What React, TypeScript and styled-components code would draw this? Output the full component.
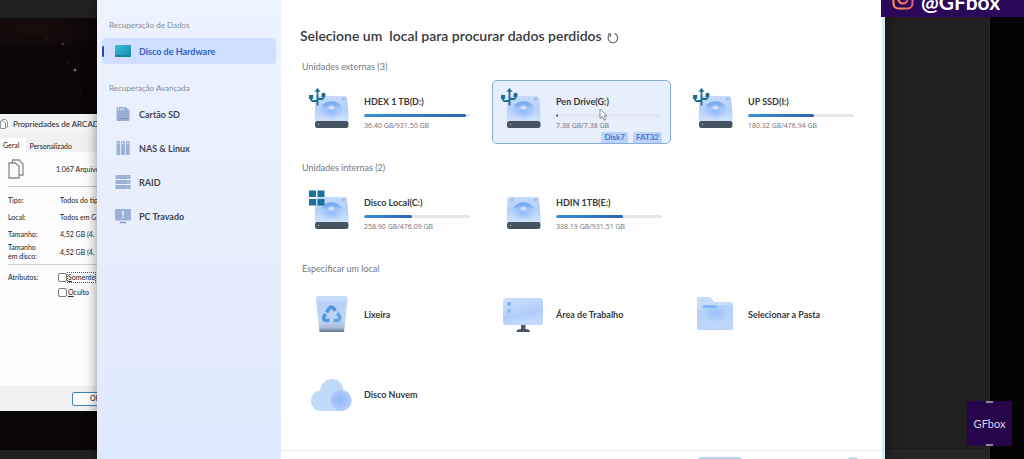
import React from "react";
import styled, { createGlobalStyle, css } from "styled-components";

const GlobalStyle = createGlobalStyle`
  *, *::before, *::after { box-sizing: border-box; }
  body {
    margin: 0;
    background: #060304;
    font-family: Lato, "Open Sans", sans-serif;
    color: #38393b;
  }
  button { font: inherit; color: inherit; border: 0; padding: 0; background: none; text-align: left; }
  h1, h2, p, dl, dd, dt { margin: 0; font-weight: inherit; }
  svg { display: block; flex: none; overflow: visible; }
`;

const Desktop = styled.div`
  position: relative;
  display: grid;
  grid-template-columns: 97px minmax(0, 1fr) 139px;
  min-height: 100vh;
  overflow: hidden;
`;

/* ---------- Left: desktop with the properties dialog ---------- */

const LeftDesktop = styled.div`
  display: flex;
  flex-direction: column;
  min-width: 0;
  overflow: hidden;
  background:
    radial-gradient(circle at 75px 70px, #a99aa0 0, transparent 2px),
    radial-gradient(circle at 63px 44px, #6d3a36 0, transparent 2px),
    radial-gradient(circle at 46px 39px, #6a4038 0, transparent 1px),
    radial-gradient(circle at 68px 62px, #573434 0, transparent 1px),
    radial-gradient(circle at 80px 90px, #6b3a3a 0, transparent 1px),
    radial-gradient(ellipse 90px 24px at 30px 30px, #1a0d0d, transparent),
    #0a0507;
`;

const Strip = styled.div<{ $height: number }>`
  flex: none;
  height: ${(p) => p.$height}px;
  background: #212121;
`;

const Dialog = styled.section`
  width: 240px;
  margin: 96px 0 auto;
  background: #f0f0f0;
  color: #222;
  font-size: 7px;
  line-height: 9px;
  white-space: nowrap;
`;

const DialogTitle = styled.h2`
  display: flex;
  align-items: center;
  gap: 5px;
  height: 20px;
  background: #f3f3f3;
  font-size: 8px;
`;

const TabBar = styled.div`
  display: flex;
  align-items: flex-end;
  height: 18px;
`;

const Tab = styled.button<{ $active?: boolean }>`
  height: ${(p) => (p.$active ? 14 : 12)}px;
  padding: 0 ${(p) => (p.$active ? 7 : 3)}px 0 3px;
  background: ${(p) => (p.$active ? "#fdfdfd" : "#f0f0f0")};
`;

const DialogPage = styled.div`
  display: flex;
  flex-direction: column;
  height: 234px;
  padding-left: 8px;
  background: #fcfcfc;
`;

const DialogHead = styled.div`
  display: flex;
  align-items: center;
  gap: 32px;
  height: 35px;
  border-bottom: 1px solid #c4c4c4;
`;

const Facts = styled.dl`
  display: grid;
  grid-template-columns: 52px 1fr;
  grid-template-rows: 17px 17px 17px 18px;
  align-items: center;
  padding: 5px 0 3px;
  border-bottom: 1px solid #d0d0d0;
`;

const Attributes = styled.div`
  display: grid;
  grid-template-columns: 50px 1fr;
  grid-auto-rows: 15px;
  align-items: center;
  padding-top: 5px;
`;

const CheckLabel = styled.label<{ $focused?: boolean }>`
  grid-column: 2;
  display: flex;
  align-items: center;
  gap: 1px;
  input {
    appearance: none;
    width: 9px;
    height: 9px;
    margin: 0;
    border: 1px solid #777;
    border-radius: 2px;
    background: #fff;
  }
  span { outline: ${(p) => (p.$focused ? "1px dotted #555" : "none")}; }
`;

const DialogFooter = styled.div`
  display: flex;
  align-items: center;
  height: 25px;
  padding-left: 72px;
`;

const OkButton = styled.button`
  width: 46px;
  height: 14px;
  border: 1px solid #3f86b4;
  border-radius: 2px;
  background: #fdfdfd;
  text-align: center;
`;

/* ---------- Recovery window ---------- */

const Window = styled.div`
  display: grid;
  grid-template-columns: 184px minmax(0, 1fr);
  border-right: 3px solid #dbe7fb;
  background: #fff;
  box-shadow: 0 0 12px rgba(0, 0, 0, 0.45);
  z-index: 1;
`;

const Sidebar = styled.nav`
  display: flex;
  flex-direction: column;
  padding: 17px 5px;
  background: linear-gradient(#ecf3fe, #e7effd 45%, #dde9fd);
`;

const NavHeading = styled.h2`
  padding-left: 7px;
  margin-bottom: 5px;
  font-size: 8px;
  line-height: 16px;
  color: #868c97;
`;

const NavGroup = styled.div`
  display: flex;
  flex-direction: column;
  gap: 8px;
  margin-bottom: 16px;
`;

const NavItem = styled.button<{ $active?: boolean }>`
  position: relative;
  display: flex;
  align-items: center;
  gap: 8px;
  height: 26px;
  padding-left: 13px;
  border-radius: 4px;
  font-size: 9px;
  font-weight: 700;
  color: #42464e;
  ${(p) =>
    p.$active &&
    css`
      background: #d0dfff;
      color: #2f62c4;
      &::before {
        content: "";
        position: absolute;
        left: 0;
        top: 8px;
        width: 2px;
        height: 11px;
        border-radius: 1px;
        background: #2448b0;
      }
    `}
`;

const Main = styled.main`
  display: flex;
  flex-direction: column;
  min-width: 0;
`;

const Content = styled.div`
  flex: 1;
  padding: 24px 19px 0;
`;

const TitleRow = styled.div`
  display: flex;
  align-items: center;
  gap: 5px;
  height: 24px;
  margin-bottom: 11px;
  button { padding-top: 4px; }
`;

const Title = styled.h1`
  font-size: 14px;
  line-height: 24px;
  font-weight: 600;
  white-space: pre;
`;

const Sections = styled.div`
  display: flex;
  flex-direction: column;
  gap: 16px;
`;

const SectionLabel = styled.h2`
  padding-left: 2px;
  margin-bottom: 5px;
  font-size: 9px;
  line-height: 16px;
  color: #77787c;
`;

const Cards = styled.div`
  display: grid;
  grid-template-columns: repeat(3, minmax(0, 1fr));
  gap: 16px 13px;
`;

const Card = styled.button<{ $selected?: boolean }>`
  position: relative;
  display: grid;
  grid-template-columns: 56px minmax(0, 1fr);
  align-items: center;
  height: 64px;
  padding: 0 8px 0 7px;
  border: 1px solid ${(p) => (p.$selected ? "#86add8" : "transparent")};
  border-radius: 5px;
  background: ${(p) => (p.$selected ? "#e7effc" : "transparent")};
  overflow: hidden;
`;

const CardText = styled.span`
  display: flex;
  flex-direction: column;
  padding-top: 2px;
`;

const Name = styled.span`
  font-size: 9px;
  line-height: 14px;
  font-weight: 700;
`;

const Track = styled.span<{ $faint?: boolean }>`
  height: 3px;
  margin: 5px 0 3px;
  border-radius: 2px;
  background: ${(p) => (p.$faint ? "#e3e6ee" : "#e6e6e8")};
  overflow: hidden;
`;

const Fill = styled.span`
  display: block;
  height: 3px;
  border-radius: 2px;
  background: linear-gradient(90deg, #3a8fd6, #2d62b4);
`;

const Size = styled.span`
  font-family: "Open Sans", sans-serif;
  font-size: 7px;
  line-height: 12px;
  color: #6f7074;
`;

const Tags = styled.span`
  position: absolute;
  right: 8px;
  bottom: 0;
  display: flex;
  gap: 5px;
`;

const Tag = styled.span`
  padding: 0 3px;
  border-radius: 2px 2px 0 0;
  background: #bdd3fb;
  color: #4379d8;
  font-size: 8px;
  line-height: 11px;
  font-weight: 700;
`;

const Footer = styled.footer`
  display: flex;
  justify-content: flex-end;
  align-items: flex-start;
  gap: 102px;
  height: 9px;
  padding: 6px 20px 0;
  border-top: 1px solid #ececee;
  overflow: hidden;
`;

const FooterButton = styled.button<{ $round?: boolean }>`
  flex: none;
  width: ${(p) => (p.$round ? 18 : 44)}px;
  height: 18px;
  border-radius: ${(p) => (p.$round ? 9 : 3)}px;
  background: #b9d4f4;
`;

/* ---------- Right: desktop and channel marks ---------- */

const RightDesktop = styled.div`
  display: grid;
  grid-template-columns: 105px 1fr;
  background: #060304;
`;

const DarkPanel = styled.div`
  display: flex;
  flex-direction: column;
  justify-content: flex-end;
  border-right: 1px solid #2b2b2b;
  background: #202020;
  &::after {
    content: "";
    height: 9px;
    border-top: 1px solid #2a2a2a;
    background: #252525;
  }
`;

const Banner = styled.div`
  position: absolute;
  z-index: 2;
  top: 0;
  right: 0;
  display: flex;
  align-items: flex-end;
  gap: 7px;
  width: 143px;
  height: 17px;
  padding: 0 0 3px 11px;
  overflow: hidden;
  background: #2a0758;
  color: #fff;
  font-size: 21px;
  line-height: 24px;
  font-weight: 700;
  svg { margin-bottom: 4px; }
`;

const Mark = styled.div`
  position: absolute;
  z-index: 2;
  right: 12px;
  bottom: 13px;
  display: flex;
  flex-direction: column;
  align-items: center;
  justify-content: space-between;
  width: 45px;
  height: 45px;
  background: #26054a;
  color: #d9d3e4;
  font-size: 11px;
  line-height: 16px;
  &::before, &::after {
    content: "";
    width: 7px;
    height: 2px;
    background: #8f86a0;
  }
`;

const Pointer = styled.svg`
  position: absolute;
  left: 106px;
  top: 27px;
`;

/* ---------- Icons ---------- */

const GradientSheet = styled.svg`
  position: absolute;
`;

const Gradients = () => (
  <GradientSheet width="0" height="0" aria-hidden="true">
    <defs>
      <linearGradient id="body" x1="0" y1="0" x2="0" y2="1">
        <stop offset="0" stopColor="#c3dafb" />
        <stop offset="0.5" stopColor="#b4cffb" />
        <stop offset="1" stopColor="#d3e4fd" />
      </linearGradient>
      <linearGradient id="disc" x1="0" y1="0" x2="0" y2="1">
        <stop offset="0" stopColor="#6fa4ef" />
        <stop offset="0.6" stopColor="#85b3f6" />
        <stop offset="1" stopColor="#a9c9fb" />
      </linearGradient>
      <radialGradient id="glow">
        <stop offset="0" stopColor="#8fb8fb" />
        <stop offset="1" stopColor="#8fb8fb" stopOpacity="0" />
      </radialGradient>
      <linearGradient id="screen" x1="0" y1="0" x2="0.3" y2="1">
        <stop offset="0" stopColor="#cfe0fb" />
        <stop offset="0.7" stopColor="#b0cdfc" />
        <stop offset="1" stopColor="#c2d9fc" />
      </linearGradient>
      <linearGradient id="bin" x1="0" y1="0" x2="0" y2="1">
        <stop offset="0" stopColor="#b7d1f8" />
        <stop offset="0.7" stopColor="#bed4f6" />
        <stop offset="0.88" stopColor="#a9bbd8" />
        <stop offset="1" stopColor="#66738d" />
      </linearGradient>
      <radialGradient id="puff" cx="0.45" cy="0.45" r="0.55">
        <stop offset="0" stopColor="#8fb6f8" />
        <stop offset="1" stopColor="#b4d0fb" />
      </radialGradient>
      <linearGradient id="folder" x1="0" y1="0" x2="0" y2="1">
        <stop offset="0" stopColor="#b3d2fb" />
        <stop offset="1" stopColor="#bfd6fb" />
      </linearGradient>
      <linearGradient id="teal" x1="0" y1="0" x2="1" y2="1">
        <stop offset="0" stopColor="#35c5cf" />
        <stop offset="1" stopColor="#1683b8" />
      </linearGradient>
      <linearGradient id="insta" x1="0" y1="1" x2="1" y2="0">
        <stop offset="0" stopColor="#f9a04b" />
        <stop offset="0.5" stopColor="#ee5a6d" />
        <stop offset="1" stopColor="#b04fb8" />
      </linearGradient>
    </defs>
  </GradientSheet>
);

type Badge = "usb" | "windows" | undefined;

const DriveIcon = ({ badge }: { badge?: Badge }) => (
  <svg width="46" height="46" viewBox="0 0 46 46">
    <path d="M9.500 7h27.500q2 0 2.200 2l1.800 24H6.500l1-24q.200-2 2-2z" fill="url(#body)" />
    <ellipse cx="23.500" cy="22" rx="12" ry="8.500" fill="url(#glow)" />
    <path d="M13 19.500a10.600 8.500 0 0 1 21 0h-6.500a4.200 3 0 0 0-8 0z" fill="url(#disc)" />
    <ellipse cx="23.500" cy="18.500" rx="2.800" ry="2" fill="#cfe1fd" />
    {!badge && <circle cx="12" cy="10" r="1.300" fill="#9caed6" />}
    <circle cx="35.500" cy="10" r="1.300" fill="#9caed6" />
    <rect x="7" y="32" width="33.500" height="7" rx="2.500" fill="#465362" />
    <circle cx="10.500" cy="35.500" r="0.800" fill="#8ba6bc" />
    {badge === "usb" && (
      <g stroke="#1f6d92" strokeWidth="1.800" fill="none">
        <path d="M9.500 2v14.500M3 8v2.500q0 1.500 1.500 1.500h3.500q1.500 0 1.500 1M15.500 7v1q0 2-2 2h-2.500q-1.500 0-1.500 1.500" />
        <path d="M6.500 2.800l3-3.700 3 3.700z" fill="#1f6d92" stroke="none" />
        <rect x="1" y="6" width="4.200" height="4" fill="#1f6d92" stroke="none" />
        <circle cx="15.500" cy="6" r="2.200" fill="#1f6d92" stroke="none" />
      </g>
    )}
    {badge === "windows" && (
      <path d="M1 0.500h7v6.500H1zM9.500 0.500h7v6.500h-7zM1 9h7v6.500H1zM9.500 9h7v6.500h-7z" fill="#1d6f9f" />
    )}
  </svg>
);

const BinIcon = () => (
  <svg width="46" height="46" viewBox="0 0 46 46">
    <path d="M10 5h26q3.500 0 3.500 4L36 41H11.500L8 9q0-4 2-4z" fill="url(#bin)" />
    <path d="M11 5h25q3.500 0 3.500 5H8q0-5 3-5z" fill="#c6dbfa" />
    <g fill="none" stroke="#4f97e2" strokeWidth="3.600">
      <path d="M18.600 21.500l2.700-4.300q2.200-2.200 4.300 0l1.700 2.700" />
      <path d="M29.500 22l2 3.500q1 3.500-2.500 4h-3.500" stroke="#62a6e8" />
      <path d="M21.500 29.500h-3.500q-3.200-.700-2-4l1.500-2.500" />
    </g>
  </svg>
);

const DesktopIcon = () => (
  <svg width="46" height="46" viewBox="0 0 46 46">
    <rect x="3" y="7" width="40" height="27" rx="2.500" fill="url(#screen)" />
    <rect x="7" y="11" width="4" height="4" rx="0.800" fill="#7fb8f5" />
    <rect x="7" y="18" width="4" height="4" rx="0.800" fill="#8fc0f7" />
    <path d="M21 34h4.500v4q4.500 0 4.500 3H16.500q0-3 4.500-3z" fill="#4b5468" />
  </svg>
);

const FolderIcon = () => (
  <svg width="46" height="46" viewBox="0 0 46 46">
    <path d="M5 8q0-2 2-2h10q1.500 0 2.500 1.500L22 11h17q2 0 2 2v24q0 2-2 2H7q-2 0-2-2z" fill="#c5dcfb" />
    <path d="M5 19h4.500L11 14h28q2 0 2 2v21q0 2-2 2H7q-2 0-2-2z" fill="url(#folder)" />
    <ellipse cx="23" cy="22" rx="13" ry="9" fill="url(#glow)" opacity="0.7" />
    <rect x="11" y="14" width="13.500" height="3" rx="0.500" fill="#84b6f7" />
  </svg>
);

const CloudIcon = () => (
  <svg width="46" height="46" viewBox="0 0 46 46">
    <path
      d="M13 40C7 40 3 35.500 3 30S6.500 20 12 19.500C13 12.500 18 8 24 8s11 4.500 11.500 11C40 20.500 43.500 24.500 43.500 29.500S39.500 40 33 40z"
      fill="#c0dafb"
    />
    <circle cx="33" cy="29.500" r="10.500" fill="url(#puff)" />
  </svg>
);

const HardwareIcon = () => (
  <svg width="16" height="14" viewBox="0 0 16 14">
    <rect y="1" width="16" height="12" rx="1" fill="url(#teal)" />
    <path d="M0 11h16v1q0 1-1 1H1q-1 0-1-1z" fill="#1a8699" />
  </svg>
);

const SdIcon = () => (
  <svg width="16" height="16" viewBox="0 0 16 16">
    <path d="M3 1h8l3.500 3.500V14q0 1-1 1h-11q-1 0-1-1V2.500Q1.500 1 3 1z" fill="#99add6" />
    <path d="M3.500 2v2.500M6 2v2.500M8.500 2v2.500" stroke="#dce7fa" strokeWidth="1.100" />
    <path d="M3 12.500h10" stroke="#7f95c4" strokeWidth="1" />
  </svg>
);

const NasIcon = () => (
  <svg width="16" height="16" viewBox="0 0 16 16">
    <g fill="#9bafd7">
      <rect x="1.500" y="1" width="3.700" height="14" rx="0.800" />
      <rect x="6.200" y="1" width="3.700" height="14" rx="0.800" />
      <rect x="10.900" y="1" width="3.700" height="14" rx="0.800" />
    </g>
    <g fill="#dce7fa">
      <circle cx="3.400" cy="3.500" r="0.900" />
      <circle cx="8.100" cy="3.500" r="0.900" />
      <circle cx="12.800" cy="3.500" r="0.900" />
    </g>
  </svg>
);

const RaidIcon = () => (
  <svg width="16" height="16" viewBox="0 0 16 16">
    <g fill="#9bafd7">
      <rect x="0.500" y="1" width="15" height="4" rx="0.600" />
      <rect x="0.500" y="6" width="15" height="4" rx="0.600" />
      <rect x="0.500" y="11" width="15" height="4" rx="0.600" />
    </g>
    <path d="M12 3h1.500M12 8h1.500M12 13h1.500" stroke="#c9d7f1" />
  </svg>
);

const PcIcon = () => (
  <svg width="16" height="16" viewBox="0 0 16 16">
    <rect y="1" width="16" height="11.500" rx="1" fill="#9bafd7" />
    <path d="M5 14.500h6" stroke="#8297c2" strokeWidth="1.500" />
    <path d="M8 3v4.500M8 8.800v1.500" stroke="#f1f6ff" strokeWidth="1.500" />
  </svg>
);

const RefreshIcon = () => (
  <svg width="12" height="12" viewBox="0 0 12 12" fill="none" stroke="#66676b" strokeWidth="1.200">
    <path d="M2.500 2.500A4.800 4.800 0 1 0 7.500 1.400" />
    <path d="M1 1.800l2.500.200-.200 2.600" />
  </svg>
);

const PagesIcon = ({ size }: { size: number }) => (
  <svg width={size} height={size * 1.25} viewBox="0 0 16 20" fill="#fafafa" stroke="#8b8b8b" strokeWidth={size < 10 ? 1.8 : 1.3}>
    <path d="M4.500 1H11l4 4v11H4.500z" />
    <path d="M1 4h6.500l3.500 3.500V19H1z" />
  </svg>
);

const InstagramIcon = () => (
  <svg width="22" height="22" viewBox="0 0 22 22" fill="none" stroke="url(#insta)" strokeWidth="2.200">
    <rect x="1.500" y="1.500" width="19" height="19" rx="5" />
    <circle cx="11" cy="11" r="4.500" />
    <circle cx="16.300" cy="5.700" r="0.600" />
  </svg>
);

/* ---------- Data ---------- */

interface Drive {
  name: string;
  size: string;
  used: number;
  badge?: Badge;
  tags?: string[];
}

const external: Drive[] = [
  { name: "HDEX 1 TB(D:)", size: "36.40 GB/931.50 GB", used: 96, badge: "usb" },
  { name: "Pen Drive(G:)", size: "7.38 GB/7.38 GB", used: 2, badge: "usb", tags: ["Disk7", "FAT32"] },
  { name: "UP SSD(I:)", size: "180.32 GB/476.94 GB", used: 62, badge: "usb" },
];

const internal: Drive[] = [
  { name: "Disco Local(C:)", size: "258.90 GB/476.09 GB", used: 45, badge: "windows" },
  { name: "HDIN 1TB(E:)", size: "338.19 GB/931.51 GB", used: 63 },
];

const places = [
  { name: "Lixeira", Icon: BinIcon },
  { name: "Área de Trabalho", Icon: DesktopIcon },
  { name: "Selecionar a Pasta", Icon: FolderIcon },
  { name: "Disco Nuvem", Icon: CloudIcon },
];

const advanced = [
  { name: "Cartão SD", Icon: SdIcon },
  { name: "NAS & Linux", Icon: NasIcon },
  { name: "RAID", Icon: RaidIcon },
  { name: "PC Travado", Icon: PcIcon },
];

const DriveCard = ({ drive }: { drive: Drive }) => (
  <Card $selected={!!drive.tags}>
    <DriveIcon badge={drive.badge} />
    <CardText>
      <Name>{drive.name}</Name>
      <Track $faint={!!drive.tags}>
        <Fill style={{ width: `${drive.used}%` }} />
      </Track>
      <Size>{drive.size}</Size>
    </CardText>
    {drive.tags && (
      <>
        <Tags>
          {drive.tags.map((t) => (
            <Tag key={t}>{t}</Tag>
          ))}
        </Tags>
        <Pointer width="9" height="13" viewBox="0 0 9 13">
          <path d="M1 1v9.500l2.300-2 1.700 3.700 1.600-.700-1.600-3.600h3z" fill="#fff" stroke="#7b7b80" strokeWidth="0.900" />
        </Pointer>
      </>
    )}
  </Card>
);

const PropertiesDialog = () => (
  <Dialog>
    <DialogTitle>
      <PagesIcon size={8} />
      Propriedades de ARCAD
    </DialogTitle>
    <TabBar>
      <Tab $active>Geral</Tab>
      <Tab>Personalizado</Tab>
    </TabBar>
    <DialogPage>
      <DialogHead>
        <PagesIcon size={16} />
        <span>1.067 Arquivos</span>
      </DialogHead>
      <Facts>
        <dt>Tipo:</dt>
        <dd>Todos do tip</dd>
        <dt>Local:</dt>
        <dd>Todos em G</dd>
        <dt>Tamanho:</dt>
        <dd>4,52 GB (4.</dd>
        <dt>
          Tamanho
          <br />
          em disco:
        </dt>
        <dd>4,52 GB (4.</dd>
      </Facts>
      <Attributes>
        <span>Atributos:</span>
        <CheckLabel $focused>
          <input type="checkbox" />
          <span>
            <u>S</u>omente
          </span>
        </CheckLabel>
        <CheckLabel>
          <input type="checkbox" />
          <span>
            <u>O</u>culto
          </span>
        </CheckLabel>
      </Attributes>
    </DialogPage>
    <DialogFooter>
      <OkButton>OK</OkButton>
    </DialogFooter>
  </Dialog>
);

export default function App() {
  return (
    <Desktop>
      <GlobalStyle />
      <Gradients />
      <LeftDesktop>
        <Strip $height={18} />
        <PropertiesDialog />
        <Strip $height={9} />
      </LeftDesktop>
      <Window>
        <Sidebar>
          <NavHeading>Recuperação de Dados</NavHeading>
          <NavGroup>
            <NavItem $active>
              <HardwareIcon />
              Disco de Hardware
            </NavItem>
          </NavGroup>
          <NavHeading>Recuperação Avançada</NavHeading>
          <NavGroup>
            {advanced.map(({ name, Icon }) => (
              <NavItem key={name}>
                <Icon />
                {name}
              </NavItem>
            ))}
          </NavGroup>
        </Sidebar>
        <Main>
          <Content>
            <TitleRow>
              <Title>{"Selecione um  local para procurar dados perdidos"}</Title>
              <button aria-label="Atualizar">
                <RefreshIcon />
              </button>
            </TitleRow>
            <Sections>
              <section>
                <SectionLabel>Unidades externas (3)</SectionLabel>
                <Cards>
                  {external.map((d) => (
                    <DriveCard key={d.name} drive={d} />
                  ))}
                </Cards>
              </section>
              <section>
                <SectionLabel>Unidades internas (2)</SectionLabel>
                <Cards>
                  {internal.map((d) => (
                    <DriveCard key={d.name} drive={d} />
                  ))}
                </Cards>
              </section>
              <section>
                <SectionLabel>Especificar um local</SectionLabel>
                <Cards>
                  {places.map(({ name, Icon }) => (
                    <Card key={name}>
                      <Icon />
                      <CardText>
                        <Name>{name}</Name>
                      </CardText>
                    </Card>
                  ))}
                </Cards>
              </section>
            </Sections>
          </Content>
          <Footer>
            <FooterButton aria-label="Verificar" />
            <FooterButton $round aria-label="Ajuda" />
          </Footer>
        </Main>
      </Window>
      <RightDesktop>
        <DarkPanel />
      </RightDesktop>
      <Banner>
        <InstagramIcon />
        @GFbox
      </Banner>
      <Mark>GFbox</Mark>
    </Desktop>
  );
}
